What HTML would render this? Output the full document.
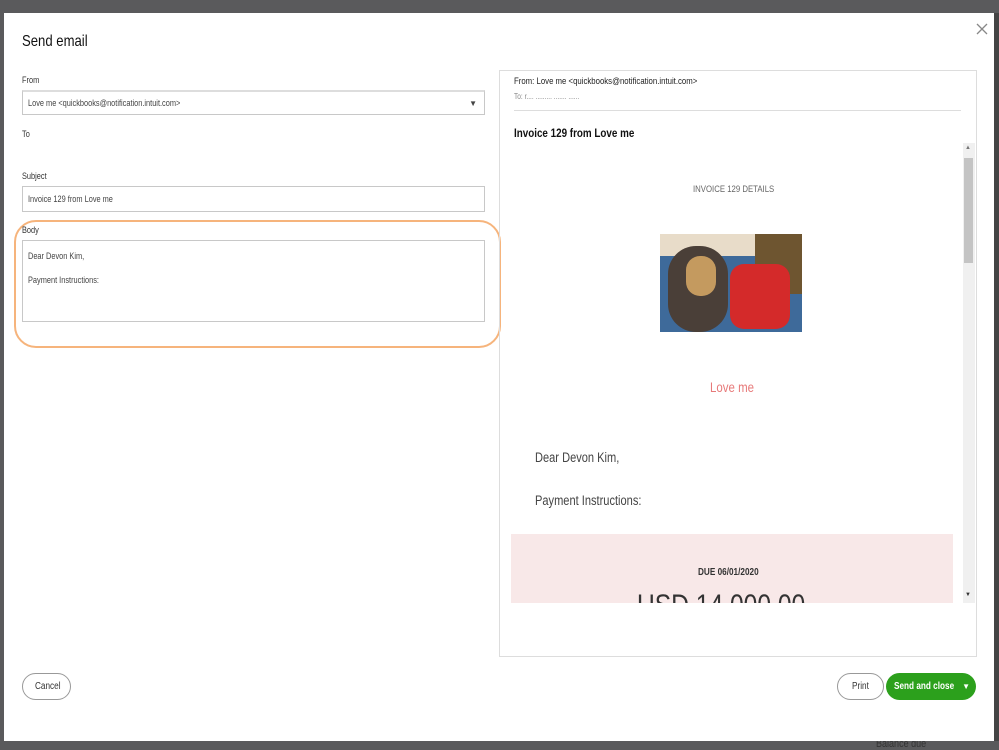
<!DOCTYPE html>
<html><head><style>
*{box-sizing:border-box;margin:0;padding:0}
body{width:999px;height:749px;background:#5a5a5c;font-family:"Liberation Sans",sans-serif;position:relative;overflow:hidden;color:#333}
.a{position:absolute}
.n{transform:scaleX(0.82);transform-origin:0 0;white-space:nowrap}
.modal{left:4px;top:13px;width:990px;height:728px;background:#fff}
.lbl{font-size:9px;color:#333}
.inp{border:1px solid #c8c8c8;background:#fff;font-size:9px;color:#444;padding-left:5px}
</style></head><body>
<div class="a" style="left:994px;top:13px;width:5px;height:728px;background:#444"></div>
<div class="a n" style="left:876px;top:738px;font-size:11px;color:#333">Balance due</div>
<div class="a modal">
<div class="a n" style="left:18px;top:20px;font-size:16px;color:#111">Send email</div>
<svg class="a" style="left:972px;top:10px" width="12" height="12" viewBox="0 0 12 12"><path d="M1 1L11 11M11 1L1 11" stroke="#888" stroke-width="1.3"/></svg>
<div class="a lbl n" style="left:18px;top:62px">From</div>
<div class="a inp" style="left:18px;top:77px;width:463px;height:25px;line-height:23px;border-top:2px solid #ddd"><span class="n" style="display:inline-block">Love me &lt;quickbooks@notification.intuit.com&gt;</span><span style="position:absolute;right:7px;font-size:8px">▼</span></div>
<div class="a lbl n" style="left:18px;top:116px">To</div>
<div class="a lbl n" style="left:18px;top:158px">Subject</div>
<div class="a inp" style="left:18px;top:173px;width:463px;height:26px;line-height:24px"><span class="n" style="display:inline-block">Invoice 129 from Love me</span></div>
<div class="a" style="left:10px;top:207px;width:487px;height:128px;border:2px solid #f6b47c;border-radius:22px"></div>
<div class="a lbl n" style="left:18px;top:212px">Body</div>
<div class="a inp" style="left:18px;top:227px;width:463px;height:82px;padding-top:9px;line-height:12px"><div class="n">Dear Devon Kim,<br><br>Payment Instructions:</div></div>
<div class="a" style="left:495px;top:57px;width:478px;height:587px;border:1px solid #ddd"></div>
<div class="a n" style="left:510px;top:63px;font-size:9.5px;color:#222">From: Love me &lt;quickbooks@notification.intuit.com&gt;</div>
<div class="a n" style="left:510px;top:79px;font-size:8px;color:#888">To: r.... ......... ....... ......</div>
<div class="a" style="left:510px;top:97px;width:447px;height:1px;background:#ddd"></div>
<div class="a n" style="left:510px;top:113px;font-size:12px;font-weight:bold;color:#111">Invoice 129 from Love me</div>
<div class="a" style="left:959px;top:130px;width:12px;height:460px;background:#f0f0f0"></div>
<div class="a" style="left:960px;top:145px;width:9px;height:105px;background:#c4c4c4"></div>
<div class="a" style="left:961px;top:132px;font-size:6px;color:#777">▲</div>
<div class="a" style="left:961px;top:579px;font-size:6px;color:#333">▼</div>
<div class="a n" style="left:689px;top:171px;font-size:9.5px;color:#666">INVOICE 129 DETAILS</div>
<div class="a" style="left:656px;top:221px;width:142px;height:98px;background:#3e6a9a;overflow:hidden">
 <div class="a" style="left:0;top:0;width:142px;height:22px;background:#e8dcc9"></div>
 <div class="a" style="left:95px;top:0;width:47px;height:60px;background:#6e5530"></div>
 <div class="a" style="left:70px;top:30px;width:60px;height:65px;background:#d42a2a;border-radius:14px"></div>
 <div class="a" style="left:8px;top:12px;width:60px;height:86px;background:#4a3f38;border-radius:28px"></div>
 <div class="a" style="left:26px;top:22px;width:30px;height:40px;background:#c49a5f;border-radius:14px"></div>
</div>
<div class="a n" style="left:706px;top:366px;font-size:14px;color:#e77a7a">Love me</div>
<div class="a n" style="left:531px;top:437px;font-size:13.5px;color:#444">Dear Devon Kim,</div>
<div class="a n" style="left:531px;top:480px;font-size:13.5px;color:#444">Payment Instructions:</div>
<div class="a" style="left:507px;top:521px;width:442px;height:69px;background:#f8e8e8;overflow:hidden">
 <div class="a n" style="left:187px;top:33px;font-size:10px;font-weight:bold;color:#333">DUE 06/01/2020</div>
 <div class="a n" style="left:126px;top:55px;font-size:30px;color:#333">USD 14,000.00</div>
</div>
<div class="a" style="left:18px;top:660px;width:49px;height:27px;border:1px solid #999;border-radius:14px;font-size:10px;line-height:25px;color:#333"><span class="n" style="position:absolute;left:12px">Cancel</span></div>
<div class="a" style="left:833px;top:660px;width:47px;height:27px;border:1px solid #999;border-radius:14px;font-size:10px;line-height:25px;color:#333"><span class="n" style="position:absolute;left:14px">Print</span></div>
<div class="a" style="left:882px;top:660px;width:90px;height:27px;background:#2ca01c;border-radius:14px;font-size:10px;line-height:27px;color:#fff;font-weight:bold"><span class="n" style="position:absolute;left:8px">Send and close</span><span style="position:absolute;right:6px;font-size:8px">▼</span></div>
</div>
</body></html>
